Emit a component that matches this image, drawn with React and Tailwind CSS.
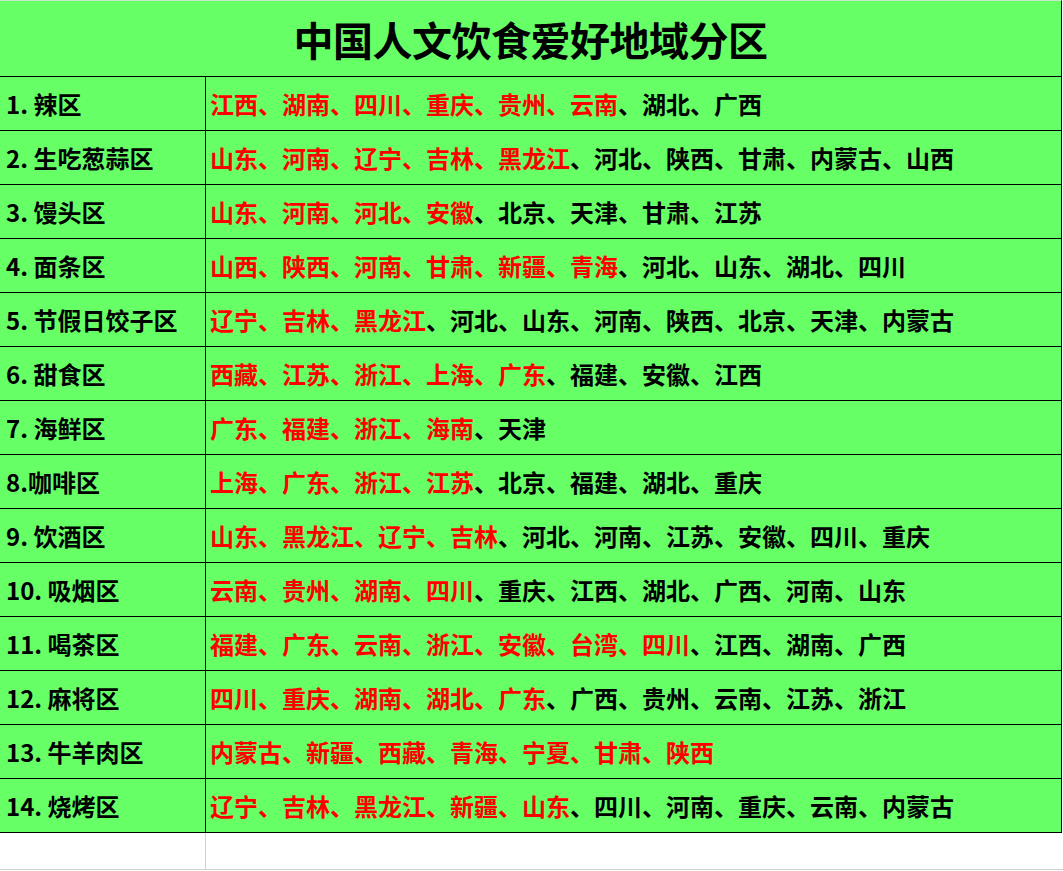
import React from 'react';

const rows = [
  ['1. 辣区', '江西、湖南、四川、重庆、贵州、云南', '、湖北、广西'],
  ['2. 生吃葱蒜区', '山东、河南、辽宁、吉林、黑龙江', '、河北、陕西、甘肃、内蒙古、山西'],
  ['3. 馒头区', '山东、河南、河北、安徽', '、北京、天津、甘肃、江苏'],
  ['4. 面条区', '山西、陕西、河南、甘肃、新疆、青海', '、河北、山东、湖北、四川'],
  ['5. 节假日饺子区', '辽宁、吉林、黑龙江', '、河北、山东、河南、陕西、北京、天津、内蒙古'],
  ['6. 甜食区', '西藏、江苏、浙江、上海、广东', '、福建、安徽、江西'],
  ['7. 海鲜区', '广东、福建、浙江、海南', '、天津'],
  ['8.咖啡区', '上海、广东、浙江、江苏', '、北京、福建、湖北、重庆'],
  ['9. 饮酒区', '山东、黑龙江、辽宁、吉林', '、河北、河南、江苏、安徽、四川、重庆'],
  ['10. 吸烟区', '云南、贵州、湖南、四川', '、重庆、江西、湖北、广西、河南、山东'],
  ['11. 喝茶区', '福建、广东、云南、浙江、安徽、台湾、四川', '、江西、湖南、广西'],
  ['12. 麻将区', '四川、重庆、湖南、湖北、广东', '、广西、贵州、云南、江苏、浙江'],
  ['13. 牛羊肉区', '内蒙古、新疆、西藏、青海、宁夏、甘肃、陕西', ''],
  ['14. 烧烤区', '辽宁、吉林、黑龙江、新疆、山东', '、四川、河南、重庆、云南、内蒙古'],
];

const font = { fontFamily: '"Noto Sans CJK SC", "Noto Sans", sans-serif' };

export default function App() {
  return (
    <div className="w-[1063px] h-[871px] bg-white overflow-hidden" style={font}>
      <div className="w-[1062px] bg-[#66ff66] border-t border-[#c8e6c8] border-r border-r-black">
        <div className="h-[76px] flex items-center justify-center border-b border-black">
          <h1 className="text-[40px] font-bold text-black leading-none tracking-[-0.5px]">中国人文饮食爱好地域分区</h1>
        </div>
        {rows.map(([label, red, black]) => (
          <div key={label} className="flex h-[54px] border-b border-black">
            <div className="w-[206px] shrink-0 border-r border-black flex items-center pl-[6px] text-[24px] font-bold text-black leading-none whitespace-nowrap">
              {label}
            </div>
            <div className="flex items-center pl-[4px] text-[24px] font-bold leading-none whitespace-nowrap">
              <span className="text-[#ff0000]">{red}</span>
              <span className="text-black">{black}</span>
            </div>
          </div>
        ))}
      </div>
      <div className="flex h-[37px] border-b border-[#d0d0d0]">
        <div className="w-[206px] border-r border-[#d0d0d0]"></div>
        <div className="flex-1"></div>
      </div>
    </div>
  );
}
